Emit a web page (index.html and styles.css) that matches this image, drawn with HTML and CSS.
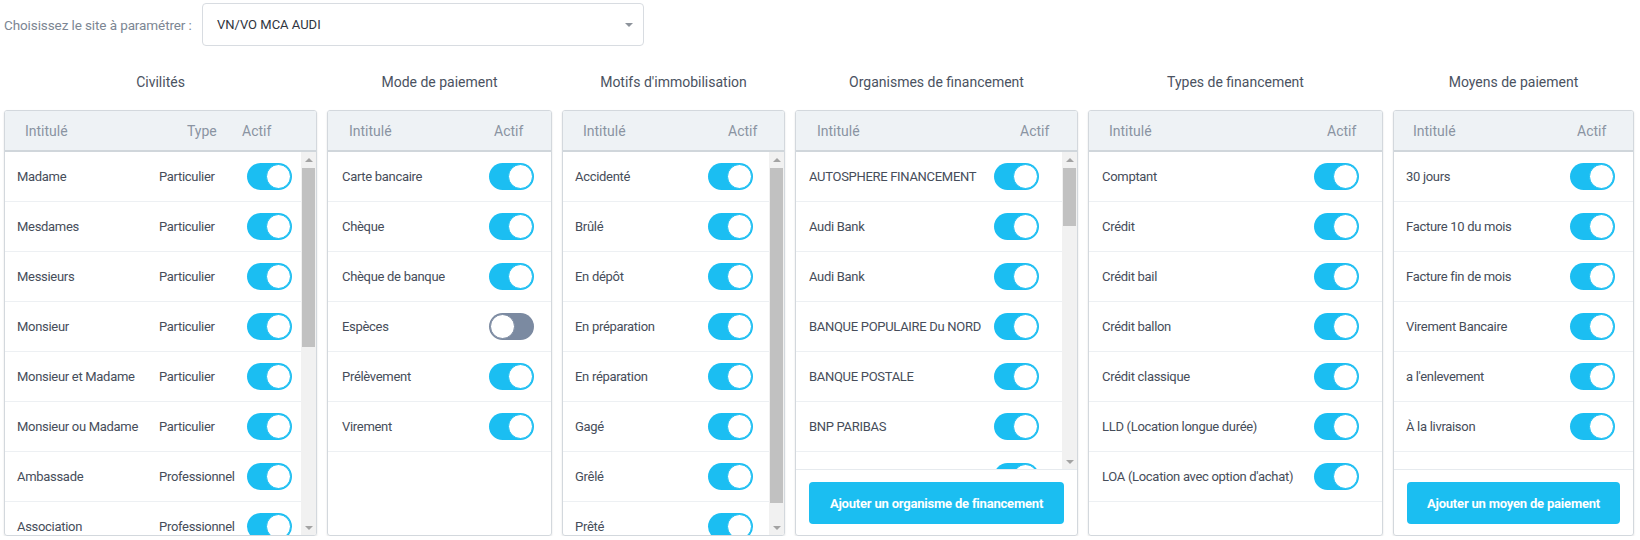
FILE: index.html
```html
<!DOCTYPE html>
<html lang="fr">
<head>
    <meta charset="UTF-8">
    <meta name="viewport" content="width=device-width, initial-scale=1.0">
    <link rel="stylesheet" href="styles.css">
    <title>Paramétrage du site</title>
</head>
<body>
    <div class="site-picker">
        <label class="site-label">Choisissez le site à paramétrer :</label>
        <div class="site-select">VN/VO MCA AUDI<span class="caret"></span></div>
    </div>

    <div class="boards">
        <!-- Civilités -->
        <section class="board civ">
            <h2>Civilités</h2>
            <div class="card">
                <div class="card-head">
                    <span class="h-name">Intitulé</span><span class="h-type">Type</span><span class="h-actif">Actif</span>
                </div>
                <div class="card-body">
                    <div class="list">
                        <div class="item"><span class="name">Madame</span><span class="type">Particulier</span><span class="switch on"></span></div>
                        <div class="item"><span class="name">Mesdames</span><span class="type">Particulier</span><span class="switch on"></span></div>
                        <div class="item"><span class="name">Messieurs</span><span class="type">Particulier</span><span class="switch on"></span></div>
                        <div class="item"><span class="name">Monsieur</span><span class="type">Particulier</span><span class="switch on"></span></div>
                        <div class="item"><span class="name">Monsieur et Madame</span><span class="type">Particulier</span><span class="switch on"></span></div>
                        <div class="item"><span class="name">Monsieur ou Madame</span><span class="type">Particulier</span><span class="switch on"></span></div>
                        <div class="item"><span class="name">Ambassade</span><span class="type">Professionnel</span><span class="switch on"></span></div>
                        <div class="item"><span class="name">Association</span><span class="type">Professionnel</span><span class="switch on"></span></div>
                    </div>
                    <div class="scrollbar">
                        <span class="arrow up"></span>
                        <div class="track"><div class="thumb"></div></div>
                        <span class="arrow down"></span>
                    </div>
                </div>
            </div>
        </section>

        <!-- Mode de paiement -->
        <section class="board mode">
            <h2>Mode de paiement</h2>
            <div class="card">
                <div class="card-head">
                    <span class="h-name">Intitulé</span><span class="h-actif">Actif</span>
                </div>
                <div class="card-body">
                    <div class="list">
                        <div class="item"><span class="name">Carte bancaire</span><span class="switch on"></span></div>
                        <div class="item"><span class="name">Chèque</span><span class="switch on"></span></div>
                        <div class="item"><span class="name">Chèque de banque</span><span class="switch on"></span></div>
                        <div class="item"><span class="name">Espèces</span><span class="switch"></span></div>
                        <div class="item"><span class="name">Prélèvement</span><span class="switch on"></span></div>
                        <div class="item"><span class="name">Virement</span><span class="switch on"></span></div>
                    </div>
                </div>
            </div>
        </section>

        <!-- Motifs d'immobilisation -->
        <section class="board motifs">
            <h2>Motifs d'immobilisation</h2>
            <div class="card">
                <div class="card-head">
                    <span class="h-name">Intitulé</span><span class="h-actif">Actif</span>
                </div>
                <div class="card-body">
                    <div class="list">
                        <div class="item"><span class="name">Accidenté</span><span class="switch on"></span></div>
                        <div class="item"><span class="name">Brûlé</span><span class="switch on"></span></div>
                        <div class="item"><span class="name">En dépôt</span><span class="switch on"></span></div>
                        <div class="item"><span class="name">En préparation</span><span class="switch on"></span></div>
                        <div class="item"><span class="name">En réparation</span><span class="switch on"></span></div>
                        <div class="item"><span class="name">Gagé</span><span class="switch on"></span></div>
                        <div class="item"><span class="name">Grêlé</span><span class="switch on"></span></div>
                        <div class="item"><span class="name">Prêté</span><span class="switch on"></span></div>
                    </div>
                    <div class="scrollbar">
                        <span class="arrow up"></span>
                        <div class="track"><div class="thumb"></div></div>
                        <span class="arrow down"></span>
                    </div>
                </div>
            </div>
        </section>

        <!-- Organismes de financement -->
        <section class="board orgs">
            <h2>Organismes de financement</h2>
            <div class="card">
                <div class="card-head">
                    <span class="h-name">Intitulé</span><span class="h-actif">Actif</span>
                </div>
                <div class="card-body">
                    <div class="list">
                        <div class="item"><span class="name">AUTOSPHERE FINANCEMENT</span><span class="switch on"></span></div>
                        <div class="item"><span class="name">Audi Bank</span><span class="switch on"></span></div>
                        <div class="item"><span class="name">Audi Bank</span><span class="switch on"></span></div>
                        <div class="item"><span class="name">BANQUE POPULAIRE Du NORD</span><span class="switch on"></span></div>
                        <div class="item"><span class="name">BANQUE POSTALE</span><span class="switch on"></span></div>
                        <div class="item"><span class="name">BNP PARIBAS</span><span class="switch on"></span></div>
                        <div class="item"><span class="name"></span><span class="switch on"></span></div>
                    </div>
                    <div class="scrollbar">
                        <span class="arrow up"></span>
                        <div class="track"><div class="thumb"></div></div>
                        <span class="arrow down"></span>
                    </div>
                </div>
                <div class="card-foot">
                    <button class="btn-add">Ajouter un organisme de financement</button>
                </div>
            </div>
        </section>

        <!-- Types de financement -->
        <section class="board types">
            <h2>Types de financement</h2>
            <div class="card">
                <div class="card-head">
                    <span class="h-name">Intitulé</span><span class="h-actif">Actif</span>
                </div>
                <div class="card-body">
                    <div class="list">
                        <div class="item"><span class="name">Comptant</span><span class="switch on"></span></div>
                        <div class="item"><span class="name">Crédit</span><span class="switch on"></span></div>
                        <div class="item"><span class="name">Crédit bail</span><span class="switch on"></span></div>
                        <div class="item"><span class="name">Crédit ballon</span><span class="switch on"></span></div>
                        <div class="item"><span class="name">Crédit classique</span><span class="switch on"></span></div>
                        <div class="item"><span class="name">LLD (Location longue durée)</span><span class="switch on"></span></div>
                        <div class="item"><span class="name">LOA (Location avec option d'achat)</span><span class="switch on"></span></div>
                    </div>
                </div>
            </div>
        </section>

        <!-- Moyens de paiement -->
        <section class="board moyens">
            <h2>Moyens de paiement</h2>
            <div class="card">
                <div class="card-head">
                    <span class="h-name">Intitulé</span><span class="h-actif">Actif</span>
                </div>
                <div class="card-body">
                    <div class="list">
                        <div class="item"><span class="name">30 jours</span><span class="switch on"></span></div>
                        <div class="item"><span class="name">Facture 10 du mois</span><span class="switch on"></span></div>
                        <div class="item"><span class="name">Facture fin de mois</span><span class="switch on"></span></div>
                        <div class="item"><span class="name">Virement Bancaire</span><span class="switch on"></span></div>
                        <div class="item"><span class="name">a l'enlevement</span><span class="switch on"></span></div>
                        <div class="item"><span class="name">À la livraison</span><span class="switch on"></span></div>
                    </div>
                </div>
                <div class="card-foot">
                    <button class="btn-add">Ajouter un moyen de paiement</button>
                </div>
            </div>
        </section>
    </div>
</body>
</html>
```

FILE: styles.css
```css
body {
    margin: 0;
    padding: 3px 4px 0 4px;
    background-color: #ffffff;
    font-family: 'Roboto', 'Liberation Sans', sans-serif;
    color: #454d5b;
}

/* site selector */
.site-picker {
    display: flex;
    align-items: center;
}
.site-label {
    font-size: 13.5px;
    color: #7c8693;
    width: 198px;
    letter-spacing: -0.1px;
}
.site-select {
    position: relative;
    box-sizing: border-box;
    width: 442px;
    height: 43px;
    border: 1px solid #d8dce1;
    border-radius: 4px;
    padding-left: 14px;
    display: flex;
    align-items: center;
    font-size: 13px;
    color: #2f3540;
}
.caret {
    position: absolute;
    right: 10px;
    top: 19px;
    width: 0;
    height: 0;
    border-left: 4px solid transparent;
    border-right: 4px solid transparent;
    border-top: 4px solid #8d939b;
}

/* boards */
.boards {
    display: flex;
    gap: 10px;
    margin-top: 26px;
}
.board h2 {
    margin: 0 0 18px 0;
    font-size: 14px;
    font-weight: normal;
    line-height: 20px;
    text-align: center;
    color: #4a5261;
}
.card {
    box-sizing: border-box;
    height: 426px;
    border: 1px solid #d3d8dd;
    border-radius: 3px;
    box-shadow: 0 1px 2px rgba(0, 0, 0, 0.12);
    display: flex;
    flex-direction: column;
    overflow: hidden;
}
.card-head {
    display: flex;
    align-items: center;
    height: 39px;
    flex: none;
    background-color: #eef2f5;
    border-bottom: 2px solid #d0d6db;
    font-size: 14px;
    color: #8a94a2;
}
.h-name {
    flex: 1;
}
.card-body {
    flex: 1;
    min-height: 0;
    display: flex;
}
.list {
    flex: 1;
    overflow: hidden;
}
.item {
    display: flex;
    align-items: center;
    height: 49px;
    border-bottom: 1px solid #edf0f3;
    font-size: 13px;
    letter-spacing: -0.3px;
    color: #464d5a;
}
.item .name {
    flex: 1;
    white-space: nowrap;
}

/* scrollbar drawn next to long lists */
.scrollbar {
    flex: none;
    width: 15px;
    background-color: #f1f1f1;
    display: flex;
    flex-direction: column;
}
.arrow {
    flex: none;
    height: 15px;
    display: flex;
    align-items: center;
    justify-content: center;
}
.arrow::before {
    content: "";
    width: 0;
    height: 0;
    border-left: 4px solid transparent;
    border-right: 4px solid transparent;
}
.arrow.up::before {
    border-bottom: 4px solid #a3a3a3;
}
.arrow.down::before {
    border-top: 4px solid #a3a3a3;
}
.track {
    flex: 1;
    padding: 1px 1px 0 1px;
}
.thumb {
    background-color: #c1c1c1;
    height: 100px;
}

.card-foot {
    flex: none;
    border-top: 1px solid #e6eaee;
    padding: 12px 13px 11px 13px;
}
.btn-add {
    display: block;
    width: 100%;
    height: 42px;
    border: none;
    border-radius: 4px;
    background-color: #1bbef1;
    color: #ffffff;
    font-family: 'Roboto', 'Liberation Sans', sans-serif;
    font-size: 13px;
    font-weight: bold;
    letter-spacing: -0.2px;
}

/* toggle switch */
.switch {
    position: relative;
    flex: none;
    width: 45px;
    height: 27px;
    border-radius: 14px;
    background-color: #7b8aa1;
}
.switch::after {
    content: "";
    position: absolute;
    top: 1px;
    left: 1px;
    width: 25px;
    height: 25px;
    box-sizing: border-box;
    border-radius: 50%;
    background-color: #ffffff;
    border: 1px solid #7b8aa1;
}
.switch.on {
    background-color: #1bbef2;
}
.switch.on::after {
    left: 19px;
    border-color: #1bbef2;
}

/* column sizes for each board */
.civ .card { width: 313px; }
.civ .h-name { padding-left: 20px; }
.civ .h-type { width: 55px; }
.civ .h-actif { width: 74px; }
.civ .item { padding: 0 9px 0 12px; }
.civ .item .type { width: 88px; }
.civ .thumb { height: 179px; }

.mode .card { width: 225px; }
.mode .h-name { padding-left: 21px; }
.mode .h-actif { width: 57px; }
.mode .item { padding: 0 17px 0 14px; }

.motifs .card { width: 223px; }
.motifs .h-name { padding-left: 20px; }
.motifs .h-actif { width: 56px; }
.motifs .item { padding: 0 16px 0 12px; }
.motifs .thumb { height: 335px; }

.orgs .card { width: 283px; }
.orgs .h-name { padding-left: 21px; }
.orgs .h-actif { width: 57px; }
.orgs .item { padding: 0 23px 0 13px; }
.orgs .thumb { height: 58px; }

.types .card { width: 295px; }
.types .h-name { padding-left: 20px; }
.types .h-actif { width: 55px; }
.types .item { padding: 0 23px 0 13px; }

.moyens .card { width: 241px; }
.moyens .h-name { padding-left: 19px; }
.moyens .h-actif { width: 56px; }
.moyens .item { padding: 0 18px 0 12px; }
```
